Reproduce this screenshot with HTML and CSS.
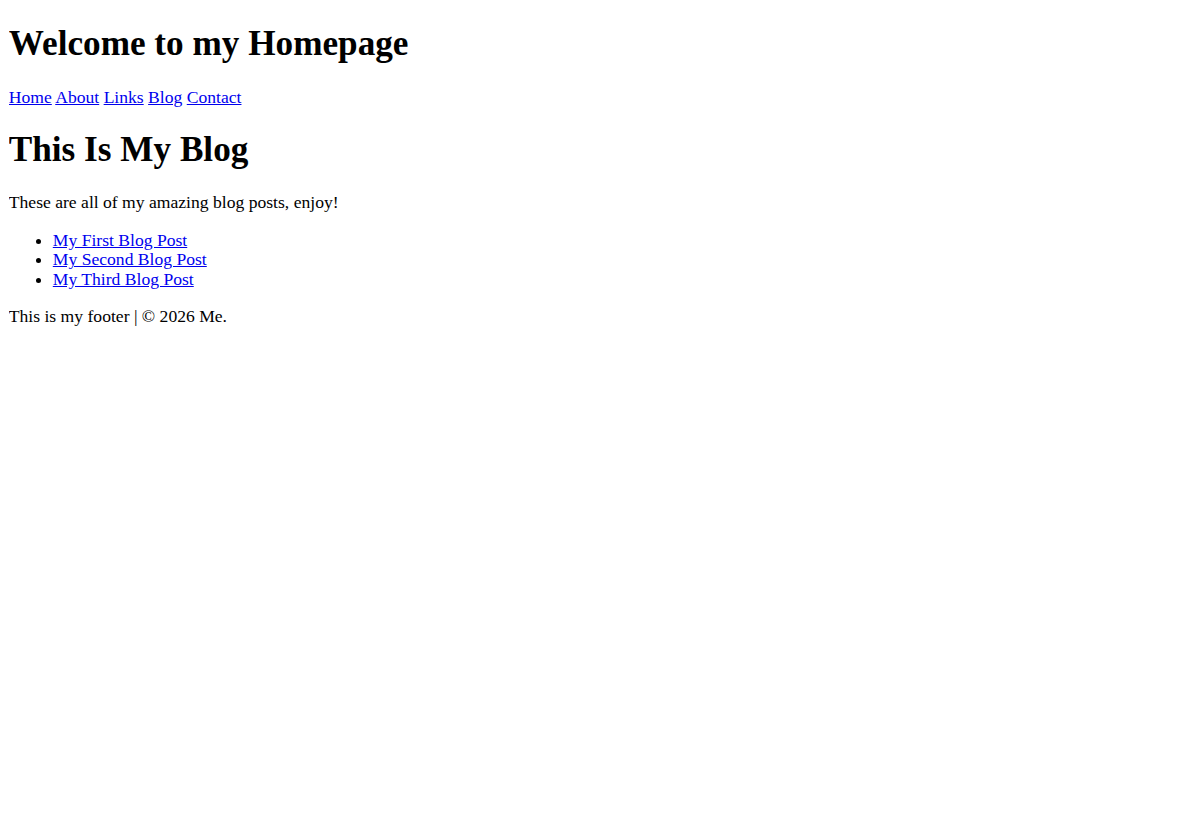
FILE: index.html
```html
<!DOCTYPE html>
<html>
<head>
<meta charset="utf-8">
<title>My Blog</title>
<link rel="stylesheet" href="styles.css">
</head>
<body>
<header class="site-header">
<h1 class="title title-first">Welcome to my Homepage</h1>
<nav class="nav"><a href="#">Home</a> <a href="#">About</a> <a href="#">Links</a> <a href="#">Blog</a> <a href="#">Contact</a></nav>
</header>
<main>
<h1 class="title">This Is My Blog</h1>
<p class="text">These are all of my amazing blog posts, enjoy!</p>
<ul class="posts">
<li><a href="#">My First Blog Post</a></li>
<li><a href="#">My Second Blog Post</a></li>
<li><a href="#">My Third Blog Post</a></li>
</ul>
</main>
<footer>
<p class="text">This is my footer | © 2026 Me.</p>
</footer>
</body>
</html>
```
FILE: styles.css
```css
body {
  margin: 8.8px;
  font-family: "Liberation Serif", "Times New Roman", serif;
  font-size: 17.6px;
  line-height: 19.5px;
  color: #000;
  background: #fff;
}
a {
  color: #0000ee;
}
.title {
  font-size: 35.2px;
  line-height: 40px;
  font-weight: bold;
  margin: 22.4px 0 23.8px;
}
.title-first {
  margin-top: 15.2px;
}
.nav {
  margin: 0;
}
.text {
  margin: 18px 0;
}
.posts {
  margin: 18px 0;
  padding-left: 44px;
}
```
